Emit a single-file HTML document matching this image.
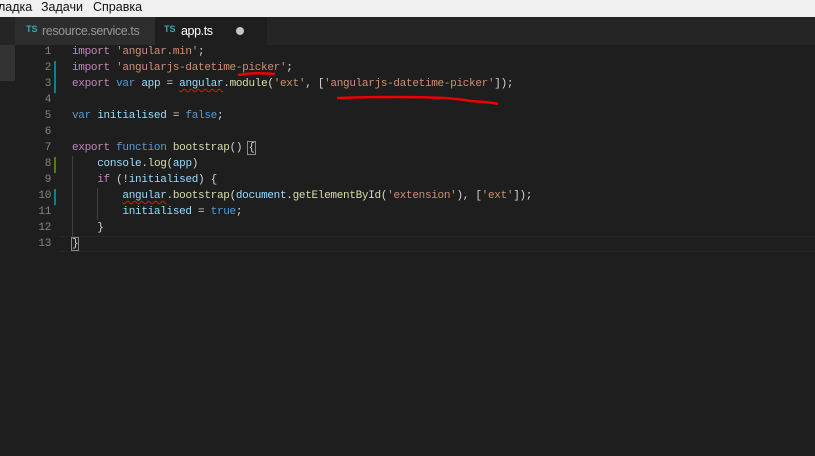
<!DOCTYPE html>
<html><head><meta charset="utf-8"><style>
*{margin:0;padding:0;box-sizing:border-box}
body{width:815px;height:456px;background:#1e1e1e;overflow:hidden;position:relative;font-family:"Liberation Sans",sans-serif}
.menu{position:absolute;left:0;top:0;width:815px;height:17px;background:#f0f0f0;color:#111;font-size:12.5px;line-height:15px}
.menu span{position:absolute;top:0}
.tabs{position:absolute;left:0;top:17px;width:815px;height:28px;background:#252526}
.tab{position:absolute;top:0;height:28px;font-size:12.5px;line-height:28px;letter-spacing:-0.4px}
.ts{color:#519aba;font-size:9px;font-weight:bold;position:absolute;top:-2px;letter-spacing:0}
.code{position:absolute;left:0;top:44px;font-family:"Liberation Mono",monospace;font-size:11px;letter-spacing:-0.3px;line-height:16px;white-space:pre}
.ln{position:absolute;left:0;width:51px;text-align:right;color:#858585}
.l{position:absolute;left:72px;color:#d4d4d4}
.k{color:#c586c0}.b{color:#569cd6}.s{color:#ce9178}.v{color:#9cdcfe}.f{color:#dcdcaa}
.sq{text-decoration:underline wavy #e51400;text-decoration-thickness:1px;text-underline-offset:2px}
.bar{position:absolute;left:54px;width:2px}
.guide{position:absolute;width:1px;background:#404040}
</style></head><body>
<div class="menu"><span style="left:-2px">ладка</span><span style="left:41px">Задачи</span><span style="left:93px">Справка</span></div>
<div class="tabs">
 <div class="tab" style="left:15px;width:140px;background:#2d2d2d;color:#969696"><span class="ts" style="left:11px">TS</span><span style="position:absolute;left:27px">resource.service.ts</span></div>
 <div class="tab" style="left:155px;width:112px;background:#1e1e1e;color:#fff"><span class="ts" style="left:9px">TS</span><span style="position:absolute;left:26px">app.ts</span><span style="position:absolute;left:81px;top:10px;width:8px;height:8px;border-radius:50%;background:#c5c5c5"></span></div>
</div>
<div style="position:absolute;left:0;top:45px;width:15px;height:36px;background:#333"></div>
<div style="position:absolute;left:60px;top:236px;width:755px;height:16px;border-top:1px solid #282828;border-bottom:1px solid #282828"></div>
<div class="bar" style="top:61px;height:32px;background:#0c7d9d"></div>
<div class="bar" style="top:157px;height:16px;background:#587c0c"></div>
<div class="bar" style="top:189px;height:16px;background:#0c7d9d"></div>
<div class="guide" style="left:72px;top:156px;height:80px"></div>
<div class="guide" style="left:97px;top:188px;height:32px"></div>
<div class="code">
<div class="ln" style="top:0">1</div><div class="ln" style="top:16px">2</div><div class="ln" style="top:32px">3</div><div class="ln" style="top:48px">4</div><div class="ln" style="top:64px">5</div><div class="ln" style="top:80px">6</div><div class="ln" style="top:96px">7</div><div class="ln" style="top:112px">8</div><div class="ln" style="top:128px">9</div><div class="ln" style="top:144px">10</div><div class="ln" style="top:160px">11</div><div class="ln" style="top:176px">12</div><div class="ln" style="top:192px">13</div>
<div class="l" style="top:0"><span class="k">import</span> <span class="s">'angular.min'</span>;</div>
<div class="l" style="top:16px"><span class="k">import</span> <span class="s">'angularjs-datetime-picker'</span>;</div>
<div class="l" style="top:32px"><span class="k">export</span> <span class="b">var</span> <span class="v">app</span> = <span class="v sq">angular</span>.<span class="f">module</span>(<span class="s">'ext'</span>, [<span class="s">'angularjs-datetime-picker'</span>]);</div>
<div class="l" style="top:64px"><span class="b">var</span> <span class="v">initialised</span> = <span class="b">false</span>;</div>
<div class="l" style="top:96px"><span class="k">export</span> <span class="b">function</span> <span class="f">bootstrap</span>() <span style="outline:1px solid #888">{</span></div>
<div class="l" style="top:112px">    <span class="v">console</span>.<span class="f">log</span>(<span class="v">app</span>)</div>
<div class="l" style="top:128px">    <span class="k">if</span> (!<span class="v">initialised</span>) {</div>
<div class="l" style="top:144px">        <span class="v sq">angular</span>.<span class="f">bootstrap</span>(<span class="v">document</span>.<span class="f">getElementById</span>(<span class="s">'extension'</span>), [<span class="s">'ext'</span>]);</div>
<div class="l" style="top:160px">        <span class="v">initialised</span> = <span class="b">true</span>;</div>
<div class="l" style="top:176px">    }</div>
<div class="l" style="top:192px"><span style="outline:1px solid #888">}</span></div>
</div>
<svg style="position:absolute;left:0;top:0" width="815" height="456">
<path d="M238 75 Q255 72 275 74" stroke="#e00" stroke-width="2.5" fill="none"/>
<path d="M337 98 Q400 96 445 98 Q460 99 470 101 Q490 102 498 104" stroke="#e00" stroke-width="2.5" fill="none"/>
</svg>
</body></html>
